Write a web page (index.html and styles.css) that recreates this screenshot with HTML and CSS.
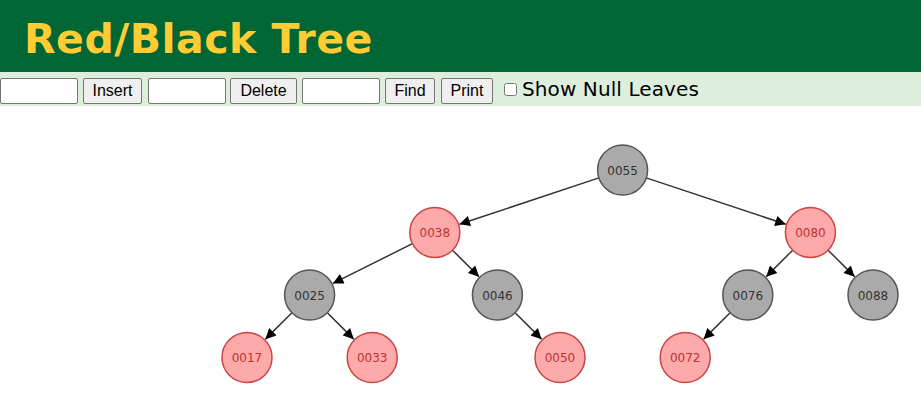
FILE: index.html
```html
<!DOCTYPE html>
<html>
<head>
<meta charset="utf-8">
<link rel="stylesheet" href="styles.css">
</head>
<body>
<div class="header"><h1 class="title">Red/Black Tree</h1></div>
<div class="toolbar">
  <input class="field" type="text">
  <button class="btn btn-insert">Insert</button>
  <input class="field field-2" type="text">
  <button class="btn btn-delete">Delete</button>
  <input class="field field-3" type="text">
  <button class="btn btn-find">Find</button>
  <button class="btn btn-print">Print</button>
  <label class="nulls"><input class="check" type="checkbox">Show Null Leaves</label>
</div>
<svg class="tree" width="921" height="304" viewBox="0 106 921 304">
  <defs>
    <marker id="arrow" viewBox="0 0 10 10" refX="10" refY="5" markerWidth="8" markerHeight="7" markerUnits="strokeWidth" orient="auto">
      <path d="M0,0 L10,5 L0,10 z" fill="#000"/>
    </marker>
  </defs>
  <g class="edges" id="edges"></g>
  <g class="nodes" id="nodes"></g>
</svg>
<script src="tree.js"></script>
</body>
</html>
```
FILE: tree.js
```js
(function () {
  var NS = 'http://www.w3.org/2000/svg';
  var R = 25;
  var nodes = {
    '0055': [6, 0, 'b'], '0038': [3, 1, 'r'], '0080': [9, 1, 'r'],
    '0025': [1, 2, 'b'], '0046': [4, 2, 'b'], '0076': [8, 2, 'b'], '0088': [10, 2, 'b'],
    '0017': [0, 3, 'r'], '0033': [2, 3, 'r'], '0050': [5, 3, 'r'], '0072': [7, 3, 'r']
  };
  var edges = [['0055','0038'],['0055','0080'],['0038','0025'],['0038','0046'],
    ['0080','0076'],['0080','0088'],['0025','0017'],['0025','0033'],['0046','0050'],['0076','0072']];
  function pos(k) { var n = nodes[k]; return [247 + 62.6 * n[0], 170 + 62.5 * n[1]]; }
  var eg = document.getElementById('edges'), ng = document.getElementById('nodes');
  edges.forEach(function (e) {
    var a = pos(e[0]), b = pos(e[1]);
    var dx = b[0] - a[0], dy = b[1] - a[1], L = Math.sqrt(dx * dx + dy * dy);
    var ux = dx / L, uy = dy / L;
    var l = document.createElementNS(NS, 'line');
    l.setAttribute('x1', a[0] + ux * R); l.setAttribute('y1', a[1] + uy * R);
    l.setAttribute('x2', b[0] - ux * (R + 1)); l.setAttribute('y2', b[1] - uy * (R + 1));
    l.setAttribute('class', 'edge');
    l.setAttribute('marker-end', 'url(#arrow)');
    eg.appendChild(l);
  });
  Object.keys(nodes).forEach(function (k) {
    var p = pos(k), c = nodes[k][2];
    var g = document.createElementNS(NS, 'g');
    g.setAttribute('class', 'node ' + (c === 'r' ? 'red' : 'black'));
    var ci = document.createElementNS(NS, 'circle');
    ci.setAttribute('cx', p[0]); ci.setAttribute('cy', p[1]); ci.setAttribute('r', R);
    var t = document.createElementNS(NS, 'text');
    t.setAttribute('x', p[0]); t.setAttribute('y', p[1] + 4.5);
    t.textContent = k;
    g.appendChild(ci); g.appendChild(t); ng.appendChild(g);
  });
})();
```
FILE: styles.css
```css
html, body { margin: 0; padding: 0; background: #fff; }
body { font-family: "DejaVu Sans", Verdana, sans-serif; }
.header { background: #006633; height: 72px; display: flex; align-items: center; }
.title { margin: 6px 0 0 0; padding-left: 24px; color: #ffcc33; font-family: "DejaVu Sans", Verdana, sans-serif; font-weight: bold; font-size: 41px; letter-spacing: 0.5px; line-height: 1; }
.toolbar { box-sizing: border-box; background: #ddeedd; height: 34px; padding-top: 6px; display: flex; align-items: flex-start; }
.field { box-sizing: border-box; width: 78px; height: 26px; margin: 0; border: 1px solid #767676; border-radius: 2px; background: #fff; padding: 1px 2px; }
.field-2 { margin-left: 6px; }
.field-3 { margin-left: 5px; }
.btn { box-sizing: border-box; height: 26px; margin: 0; padding: 0 6px; font-family: "Liberation Sans", Arial, sans-serif; font-size: 16px; color: #000; background: #efefef; border: 1px solid #767676; border-radius: 2px; }
.btn-insert { margin-left: 5px; width: 59px; }
.btn-delete { margin-left: 4px; width: 67px; }
.btn-find { margin-left: 5px; width: 50px; }
.btn-print { margin-left: 6px; width: 52px; }
.nulls { display: flex; align-items: center; height: 22px; margin-left: 11px; font-size: 20px; letter-spacing: 0.1px; color: #000; }
.check { margin: 0 5px 0 0; width: 13px; height: 13px; }
.tree { display: block; }
.edge { stroke: #333; stroke-width: 1.5; }
.node circle { stroke-width: 1.5; }
.node.black circle { fill: #aaaaaa; stroke: #555; }
.node.red circle { fill: #ffaaaa; stroke: #cc4444; }
.node text { font-family: "DejaVu Sans", Verdana, sans-serif; font-size: 12px; text-anchor: middle; }
.node.black text { fill: #333; }
.node.red text { fill: #bb3333; }
```
